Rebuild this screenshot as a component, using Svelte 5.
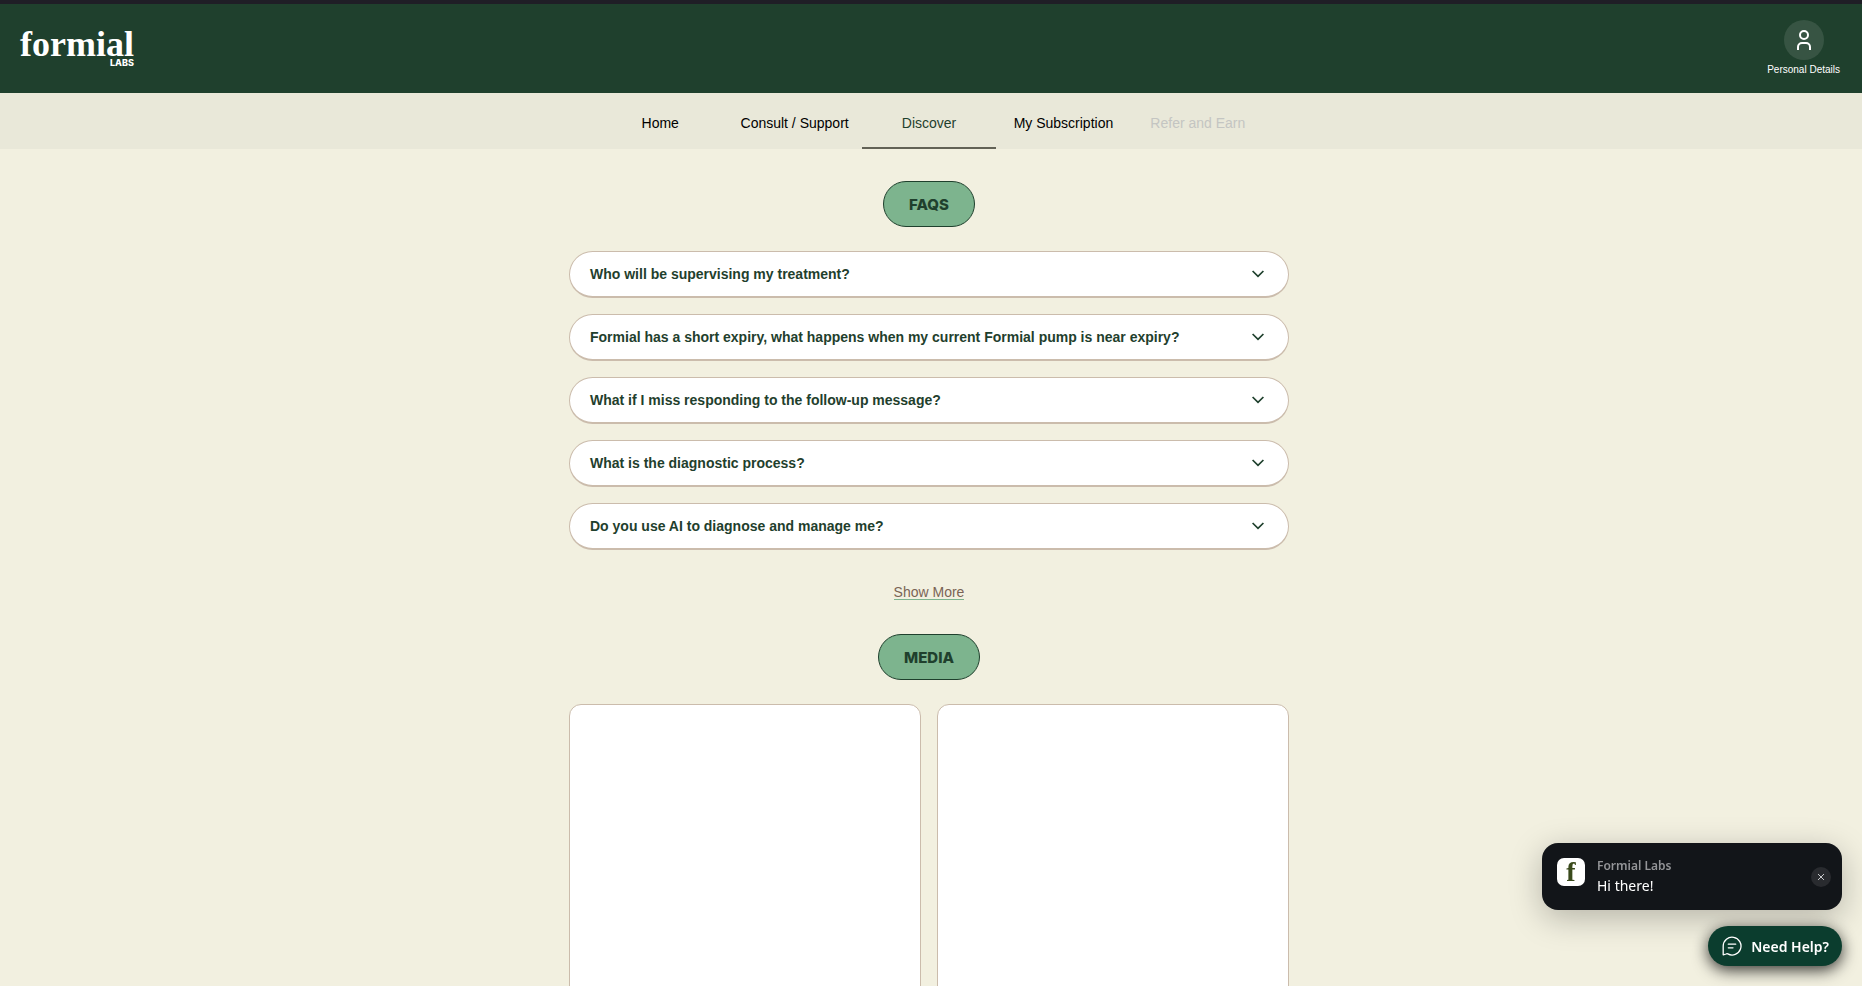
<script lang="ts">
  interface Tab {
    label: string;
    href: string;
    disabled?: boolean;
  }

  const tabs: Tab[] = [
    { label: 'Home', href: '#home' },
    { label: 'Consult / Support', href: '#consult' },
    { label: 'Discover', href: '#discover' },
    { label: 'My Subscription', href: '#subscription' },
    { label: 'Refer and Earn', href: '#refer', disabled: true },
  ];

  const faqs = [
    'Who will be supervising my treatment?',
    'Formial has a short expiry, what happens when my current Formial pump is near expiry?',
    'What if I miss responding to the follow-up message?',
    'What is the diagnostic process?',
    'Do you use AI to diagnose and manage me?',
  ];

  const media = [1, 2];

  let active = $state('Discover');
  let toastOpen = $state(true);
</script>

<div class="page">
  <header class="topbar">
    <a href="#home" class="logo">
      <span class="logo-name">formial</span>
      <span class="logo-sub">LABS</span>
    </a>
    <a href="#account" class="account">
      <span class="account-icon">
        <svg width="20" height="24" viewBox="0 0 20 24" fill="none" stroke="#fff" stroke-width="2">
          <circle cx="10" cy="7" r="4" />
          <path d="M4 22v-3a4 4 0 0 1 4-4h4a4 4 0 0 1 4 4v3" />
        </svg>
      </span>
      <span>Personal Details</span>
    </a>
  </header>

  <nav class="tabs">
    <div class="tabs-inner">
      {#each tabs as tab}
        <a
          href={tab.href}
          class="tab"
          class:active={tab.label === active}
          class:disabled={tab.disabled}
          aria-disabled={tab.disabled}
          onclick={() => { if (!tab.disabled) active = tab.label; }}
        >{tab.label}</a>
      {/each}
    </div>
  </nav>

  <main>
    <h2 class="pill">FAQS</h2>

    <div class="faqs">
      {#each faqs as question}
        <button class="faq">
          <span>{question}</span>
          <svg width="12" height="8" viewBox="0 0 12 8" fill="none" stroke="#1f402d" stroke-width="1.7">
            <path d="M0.600 1l5.400 5.400L11.400 1" />
          </svg>
        </button>
      {/each}
    </div>

    <button class="more">Show More</button>

    <h2 class="pill">MEDIA</h2>

    <div class="media">
      {#each media as item (item)}
        <div class="card"></div>
      {/each}
    </div>
  </main>

  <div class="chat">
    {#if toastOpen}
      <div class="toast">
        <span class="avatar">f</span>
        <div class="toast-text">
          <span class="toast-title">Formial Labs</span>
          <span class="toast-msg">Hi there!</span>
        </div>
        <button class="close" aria-label="Close" onclick={() => (toastOpen = false)}>
          <svg width="8" height="8" viewBox="0 0 8 8" stroke="#c9cacc" stroke-width="1">
            <path d="M1 1l6 6M7 1L1 7" />
          </svg>
        </button>
      </div>
    {/if}
    <button class="help">
      <svg width="20" height="20" viewBox="0 0 20 20" fill="none" stroke="#fff" stroke-width="1.3" stroke-linecap="round" stroke-linejoin="round">
        <path d="M1.2 18.9V10a8.9 8.9 0 1 1 4.6 7.9c-.6-.3-1.2-.2-1.7.1z" />
        <path d="M6.3 8.2h7.4M6.3 11.800h4.700" />
      </svg>
      <span>Need Help?</span>
    </button>
  </div>
</div>

<style>
  :global(body) {
    margin: 0;
    background: #f2f0e0;
  }

  .page {
    height: 100vh;
    overflow: hidden;
    font-family: 'Liberation Sans', Arial, sans-serif;
    font-size: 14px;
    color: #1f402d;
  }

  a {
    text-decoration: none;
  }

  button {
    font: inherit;
    cursor: pointer;
  }

  .topbar {
    box-sizing: border-box;
    height: 93px;
    padding: 0 22px 2px 20px;
    border-top: 4px solid #1f1e26;
    background: #1f402d;
    display: flex;
    align-items: center;
    justify-content: space-between;
  }

  .logo {
    display: flex;
    flex-direction: column;
    align-items: flex-end;
    color: #fff;
  }

  .logo-name {
    font-family: 'Liberation Serif', 'Times New Roman', serif;
    font-size: 36px;
    font-weight: 700;
    line-height: 30px;
  }

  .logo-sub {
    font-family: Inter, sans-serif;
    font-size: 9px;
    font-weight: 800;
    line-height: 8px;
  }

  .account {
    display: flex;
    flex-direction: column;
    align-items: center;
    gap: 4px;
    color: #fff;
    font-size: 10px;
    line-height: 12px;
  }

  .account-icon {
    width: 40px;
    height: 40px;
    border-radius: 50%;
    background: #375443;
    display: flex;
    align-items: center;
    justify-content: center;
  }

  .tabs {
    background: #e9e8d9;
    padding-right: 4px;
  }

  .tabs-inner {
    display: flex;
    max-width: 672px;
    margin: 0 auto;
  }

  .tab {
    flex: 1 1 0;
    box-sizing: border-box;
    height: 56px;
    padding-top: 6px;
    border-bottom: 2px solid transparent;
    display: flex;
    align-items: center;
    justify-content: center;
    white-space: nowrap;
    color: #000;
  }

  .tab.active {
    color: #1f402d;
    border-bottom-color: #626256;
  }

  .tab.disabled {
    color: #c4c5c2;
    cursor: default;
  }

  main {
    max-width: 720px;
    margin: 0 auto;
    padding: 32px 4px 0 0;
    display: flex;
    flex-direction: column;
    align-items: center;
  }

  .pill {
    margin: 0 0 24px;
    padding: 12px 25px 10px;
    border: 1px solid #1f402d;
    border-radius: 23px;
    background: #7db48e;
    font-family: Inter, sans-serif;
    font-size: 15px;
    font-weight: 800;
    line-height: 22px;
  }

  .faqs {
    width: 100%;
    display: flex;
    flex-direction: column;
    gap: 16px;
  }

  .faq {
    display: flex;
    align-items: center;
    justify-content: space-between;
    padding: 12px 24px 12px 20px;
    border: 1px solid #cbbcac;
    border-bottom-width: 2px;
    border-radius: 24px;
    background: #fff;
    color: #1f402d;
    font-weight: 700;
    line-height: 20px;
    text-align: left;
  }

  .more {
    margin: 35px 0 34px;
    padding: 0;
    border: 0;
    border-bottom: 1px solid #7db48e;
    background: none;
    color: #7a6455;
    line-height: 14px;
  }

  .media {
    width: 100%;
    display: grid;
    grid-template-columns: 1fr 1fr;
    gap: 16px;
  }

  .card {
    height: 352px;
    border: 1px solid #cbbcac;
    border-radius: 12px;
    background: #fff;
  }

  .chat {
    position: fixed;
    right: 20px;
    bottom: 20px;
    display: flex;
    flex-direction: column;
    align-items: flex-end;
    gap: 16px;
    font-family: 'Noto Sans', sans-serif;
  }

  .toast {
    box-sizing: border-box;
    width: 300px;
    padding: 12px 11px 12px 15px;
    border-radius: 16px;
    background: #121519;
    box-shadow: 0 8px 32px rgba(0, 0, 0, 0.25);
    display: flex;
    align-items: center;
  }

  .avatar {
    align-self: flex-start;
    width: 28px;
    height: 28px;
    margin: 3px 12px 0 0;
    border-radius: 7px;
    background: #fff;
    color: #3a4a1c;
    font-family: 'Liberation Serif', serif;
    font-size: 28px;
    font-weight: 700;
    line-height: 28px;
    text-align: center;
  }

  .toast-text {
    flex: 1;
    display: flex;
    flex-direction: column;
    padding-bottom: 2px;
  }

  .toast-title {
    color: #949598;
    font-size: 12px;
    font-weight: 600;
    line-height: 21px;
  }

  .toast-msg {
    color: #fff;
    line-height: 20px;
  }

  .close {
    width: 20px;
    height: 20px;
    padding: 0;
    border: 0;
    border-radius: 50%;
    background: #292b2f;
    display: flex;
    align-items: center;
    justify-content: center;
  }

  .help {
    height: 40px;
    padding: 0 13px 0 14px;
    border: 0;
    border-radius: 20px;
    background: #0b3d2e;
    box-shadow: 0 4px 16px rgba(0, 0, 0, 0.8);
    color: #fff;
    font-weight: 600;
    display: flex;
    align-items: center;
    gap: 9px;
  }
</style>
